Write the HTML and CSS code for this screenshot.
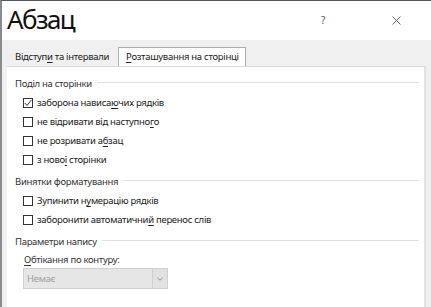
FILE: index.html
```html
<!DOCTYPE html>
<html lang="uk">
<head>
  <meta charset="UTF-8">
  <title>Абзац</title>
  <link rel="stylesheet" href="styles.css">
</head>
<body>
  <div class="dialog">
    <div class="titlebar">
      <h1 class="title">Абзац</h1>
      <span class="help">?</span>
      <span class="close">
        <svg width="9" height="9" viewBox="0 0 9 9"><path d="M0.5 0.5L8.5 8.5M8.5 0.5L0.5 8.5" stroke="#555" stroke-width="0.9"/></svg>
      </span>
    </div>

    <div class="body">
      <div class="tabs">
        <div class="tab">Відступ<u>и</u> та інтервали</div>
        <div class="tab active"><u>Р</u>озташування на сторінці</div>
      </div>

      <div class="panel">
        <div class="group">
          <div class="group-title"><span>Поділ на сторінки</span></div>
          <label class="check">
            <span class="box"><svg width="8" height="8" viewBox="0 0 8 8"><path d="M0.8 4L3 6.5L7.3 1" fill="none" stroke="#333" stroke-width="1"/></svg></span>
            <span>заборона нависа<u>ю</u>чих рядків</span>
          </label>
          <label class="check"><span class="box"></span><span>не відривати від наступно<u>г</u>о</span></label>
          <label class="check"><span class="box"></span><span>не розривати а<u>б</u>зац</span></label>
          <label class="check"><span class="box"></span><span>з ново<u>ї</u> сторінки</span></label>
        </div>

        <div class="group">
          <div class="group-title"><span>Винятки форматування</span></div>
          <label class="check"><span class="box"></span><span>Зупинити н<u>у</u>мерацію рядків</span></label>
          <label class="check"><span class="box"></span><span>заборонити автоматични<u>й</u> перенос слів</span></label>
        </div>

        <div class="group">
          <div class="group-title"><span>Параметри напису</span></div>
          <div class="field-label"><u>О</u>бтікання по контуру:</div>
          <div class="select">
            <span class="select-value">Немає</span>
            <span class="select-btn">
              <svg width="6" height="4" viewBox="0 0 6 4"><path d="M0.5 0.8L3 3.2L5.5 0.8" fill="none" stroke="#888" stroke-width="0.9"/></svg>
            </span>
          </div>
        </div>
      </div>
    </div>
  </div>
</body>
</html>
```

FILE: styles.css
```css
body {
  margin: 0;
  font-family: "Noto Sans", "Open Sans", sans-serif;
  font-size: 9.5px;
  letter-spacing: -0.3px;
  color: #222;
  background: #f0f0f0;
  overflow: hidden;
}

u {
  text-decoration-thickness: 1px;
  text-underline-offset: 1.5px;
}

.dialog {
  height: 307px;
  border-top: 1px solid #555;
  border-left: 2px solid #8a8a8a;
  box-sizing: border-box;
  display: flex;
  flex-direction: column;
}

.titlebar {
  height: 39px;
  background: #fff;
  display: flex;
  align-items: center;
  padding-left: 5px;
}

.title {
  margin: 0;
  font-size: 26px;
  font-weight: 400;
  letter-spacing: -1.6px;
  flex: 1;
  color: #111;
  line-height: 1;
  padding-bottom: 3px;
}

.help {
  font-size: 10px;
  color: #555;
  margin-right: 67px;
  padding-bottom: 2px;
}

.close {
  display: flex;
  margin-right: 30px;
}

.body {
  flex: 1;
  background: #f0f0f0;
  padding: 7px 5px 0 5px;
  display: flex;
  flex-direction: column;
}

.tabs {
  display: flex;
  gap: 3px;
  height: 19px;
}

.tab {
  padding: 0 5px 0 7px;
  line-height: 18px;
  border: 1px solid transparent;
  border-bottom: none;
}

.tab.active {
  background: #fff;
  border-color: #adadad;
  padding: 0 6px 0 7px;
}

.panel {
  flex: 1;
  background: #fff;
  border-top: 1px solid #dadada;
  border-right: 2px solid #e2e2e2;
  padding: 6px 5px 0 8px;
}

.group {
  display: flex;
  flex-direction: column;
  margin-bottom: 2px;
}

.group-title {
  display: flex;
  align-items: center;
  gap: 5px;
  height: 20px;
  color: #333;
}

.group-title::after {
  content: "";
  flex: 1;
  height: 1px;
  margin-top: -2px;
  background: #e0e0e0;
}

.check {
  display: flex;
  align-items: center;
  gap: 4px;
  height: 19px;
  padding-left: 8px;
}

.box {
  width: 8px;
  height: 8px;
  border: 1px solid #333;
  display: flex;
  align-items: center;
  justify-content: center;
  background: #fff;
}

.field-label {
  padding-left: 9px;
  margin-top: 2px;
  line-height: 14px;
  color: #333;
}

.select {
  margin-left: 8px;
  margin-top: 1px;
  width: 145px;
  height: 21px;
  box-sizing: border-box;
  border: 1px solid #d0d0d0;
  background: #e6e6e6;
  display: flex;
  align-items: center;
}

.select-value {
  flex: 1;
  padding-left: 3px;
  color: #a0a0a0;
}

.select-btn {
  width: 14px;
  height: 19px;
  border-left: 1px solid #d0d0d0;
  display: flex;
  align-items: center;
  justify-content: center;
  background: #e2e2e2;
}
```
